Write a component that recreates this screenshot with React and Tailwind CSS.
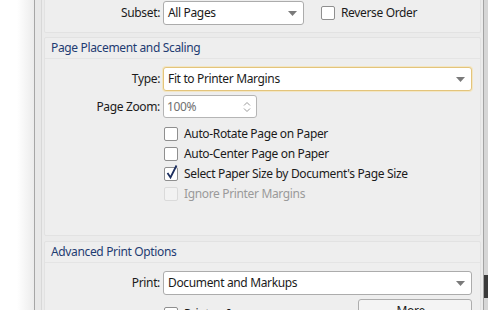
const font = {
  fontFamily: '"Segoe UI", "Noto Sans", sans-serif',
  letterSpacing: "-0.35px",
};

function DropArrow() {
  return (
    <svg width="9" height="5" viewBox="0 0 9 5" className="shrink-0">
      <path d="M0 0 L9 0 L4.5 5 Z" fill="#7a7a7a" />
    </svg>
  );
}

function Select({ value, width, focused }) {
  return (
    <div
      className={`flex h-[24px] items-center justify-between rounded-[3px] border bg-white pl-[4px] pr-[6px] ${
        focused ? "border-[#e3c47b] shadow-[0_0_0_1px_#f3e6c4]" : "border-[#acacac]"
      } ${width}`}
    >
      <span className="text-[12px] text-[#1b1b1b]">{value}</span>
      <DropArrow />
    </div>
  );
}

function Checkbox({ checked, disabled }) {
  return (
    <span
      className={`relative inline-block h-[14px] w-[14px] shrink-0 rounded-[2px] border ${
        disabled ? "border-[#dadada] bg-[#f2f2f2]" : "border-[#8f8f8f] bg-white"
      }`}
    >
      {checked && (
        <svg
          width="14"
          height="16"
          viewBox="0 0 14 16"
          className="absolute left-[0px] top-[-4px]"
        >
          <path
            d="M2.5 9 L5.5 13.5 L11.5 1.5"
            fill="none"
            stroke="#1d2f5f"
            strokeWidth="1.8"
          />
        </svg>
      )}
    </span>
  );
}

function CheckRow({ label, checked, disabled }) {
  return (
    <div className="flex h-[20px] items-center pl-[119px]">
      <Checkbox checked={checked} disabled={disabled} />
      <span
        className={`ml-[6px] text-[12px] ${
          disabled ? "text-[#9a9a9a]" : "text-[#1b1b1b]"
        }`}
      >
        {label}
      </span>
    </div>
  );
}

function Label({ children }) {
  return (
    <div className="w-[118px] shrink-0 pr-[3px] text-right text-[12px] text-[#1b1b1b]">
      {children}
    </div>
  );
}

function Panel({ title, className = "", children }) {
  return (
    <div
      className={`mx-[2px] shrink-0 rounded-[2px] border border-[#e2e2e2] bg-[#eeeeee] ${className}`}
    >
      {title && (
        <div className="h-[21px] border-b border-[#e4e4e4] pl-[6px] pt-[1px] text-[12px] text-[#1e3c72]">
          {title}
        </div>
      )}
      {children}
    </div>
  );
}

export default function App() {
  return (
    <div
      className="flex h-[310px] w-[489px] overflow-hidden bg-white"
      style={font}
    >
      <div className="w-[34px] shrink-0 bg-gradient-to-r from-white via-white to-[#ececec]" />
      <div className="w-[1px] shrink-0 bg-[#a6a6a6]" />
      <div className="w-[6px] shrink-0 bg-[#e8e8e8]" />
      <div className="w-[1px] shrink-0 bg-[#d8d8d8]" />

      <div className="flex w-[441px] shrink-0 flex-col bg-[#ebebeb]">
        <Panel className="-mt-[4px] h-[37px] border-t-0">
          <div className="flex items-center pt-[5px]">
            <Label>Subset:</Label>
            <Select value="All Pages" width="w-[141px]" />
            <div className="ml-[17px] flex items-center">
              <Checkbox />
              <span className="ml-[6px] text-[12px] text-[#1b1b1b]">
                Reverse Order
              </span>
            </div>
          </div>
        </Panel>

        <Panel title="Page Placement and Scaling" className="mt-[4px] h-[199px]">
          <div className="flex items-center pt-[8px]">
            <Label>Type:</Label>
            <Select
              value="Fit to Printer Margins"
              width="w-[309px]"
              focused
            />
          </div>
          <div className="mt-[4px] flex items-center">
            <Label>Page Zoom:</Label>
            <div className="flex h-[23px] w-[94px] items-center justify-between rounded-[3px] border border-[#b5b5b5] bg-white pl-[3px] pr-[5px]">
              <span className="text-[12px] text-[#707070]">100%</span>
              <svg width="8" height="12" viewBox="0 0 8 12">
                <path d="M1 4.5 L4 1.5 L7 4.5" fill="none" stroke="#9a9a9a" />
                <path d="M1 7.5 L4 10.5 L7 7.5" fill="none" stroke="#9a9a9a" />
              </svg>
            </div>
          </div>
          <div className="mt-[6px] flex flex-col">
            <CheckRow label="Auto-Rotate Page on Paper" />
            <CheckRow label="Auto-Center Page on Paper" />
            <CheckRow
              label="Select Paper Size by Document's Page Size"
              checked
            />
            <CheckRow label="Ignore Printer Margins" disabled />
          </div>
        </Panel>

        <Panel title="Advanced Print Options" className="mt-[5px] h-[80px]">
          <div className="flex items-center pt-[8px]">
            <Label>Print:</Label>
            <Select value="Document and Markups" width="w-[309px]" />
          </div>
          <div className="mt-[4px] flex items-start">
            <div className="mt-[6px] flex items-center pl-[119px]">
              <Checkbox />
              <span className="ml-[6px] text-[12px] text-[#1b1b1b]">
                Print as Image
              </span>
            </div>
            <div className="ml-auto mr-[8px] flex h-[24px] w-[114px] items-center justify-center rounded-[3px] border border-[#adadad] bg-[#f4f4f4] text-[12px] text-[#1b1b1b]">
              More...
            </div>
          </div>
        </Panel>
      </div>

      <div className="w-[1px] shrink-0 bg-[#a3a3a3]" />
      <div className="flex w-[4px] shrink-0 flex-col bg-[#d6d6d6]">
        <div className="mt-[275px] h-[23px] bg-[#3a3a3a]" />
      </div>
    </div>
  );
}
